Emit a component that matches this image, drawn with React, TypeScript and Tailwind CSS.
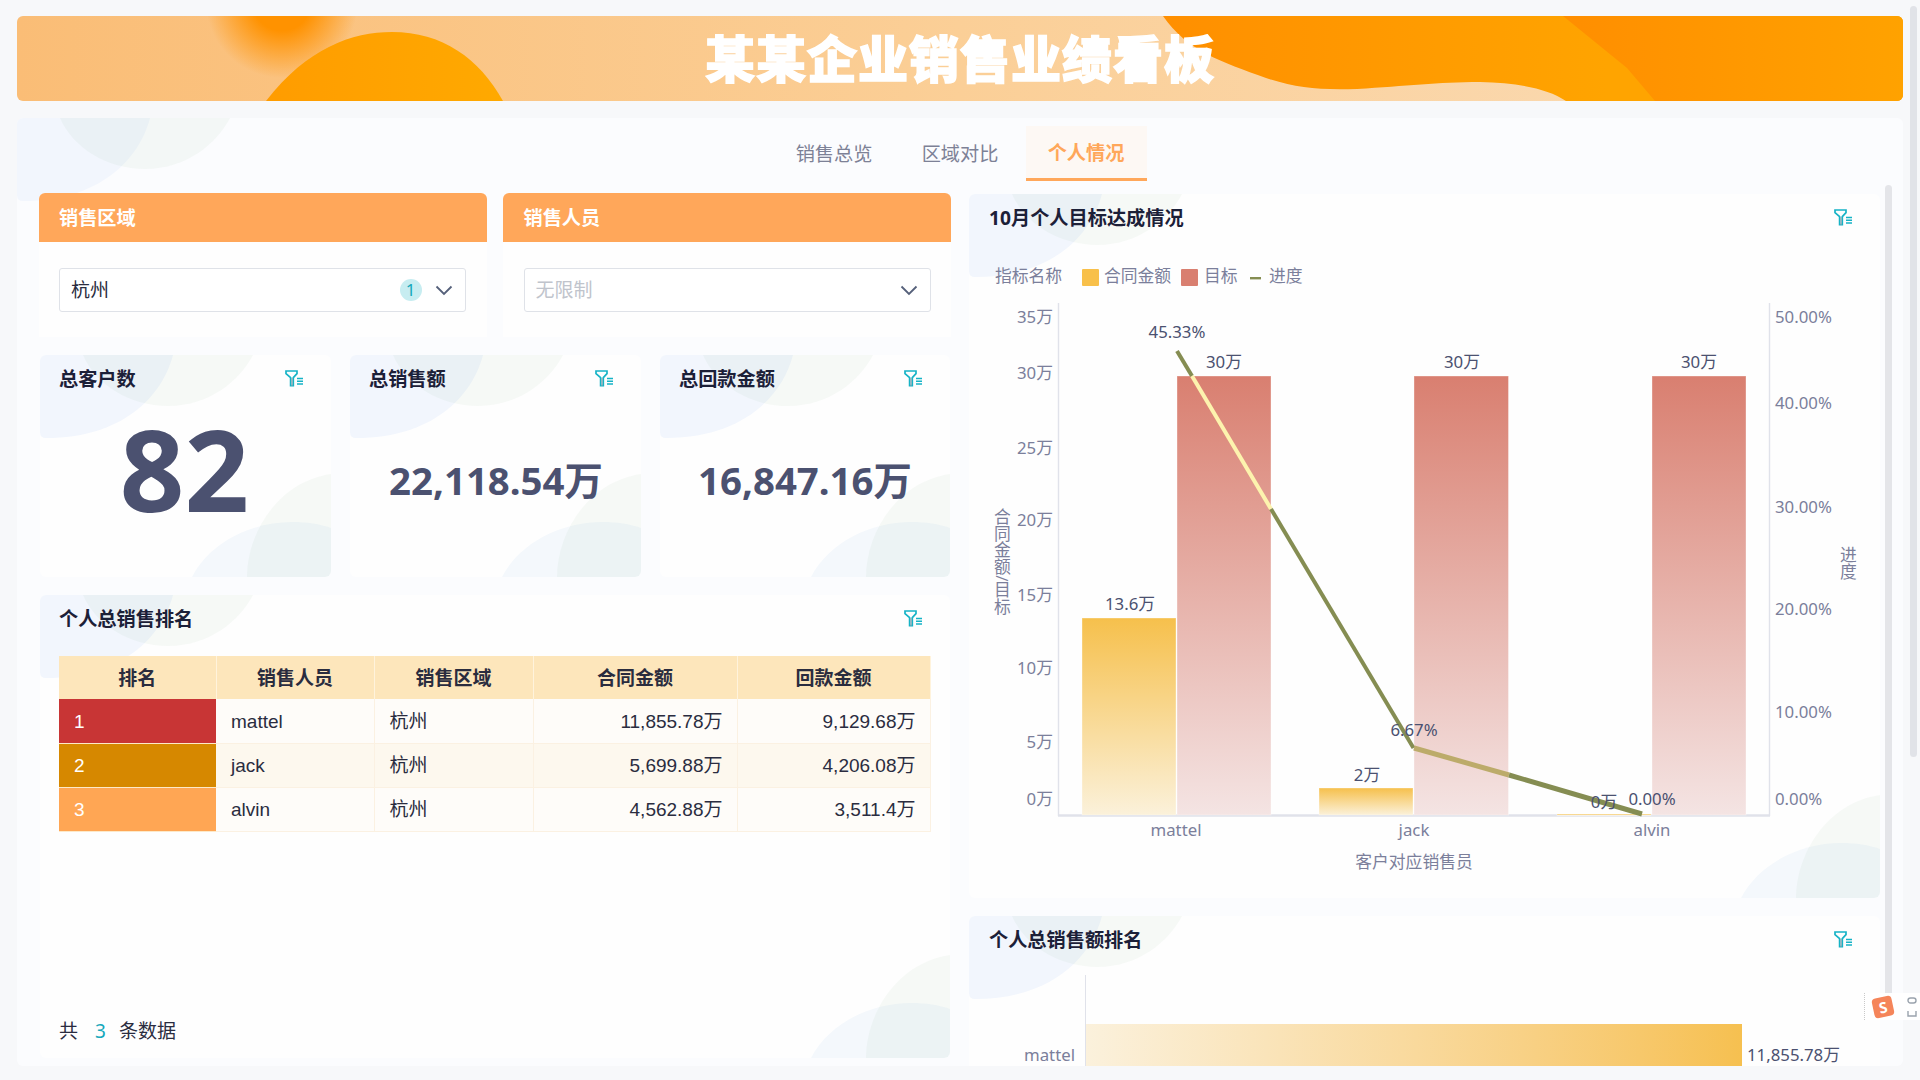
import React from "react";

function FilterIcon() {
  return (
    <svg width="18" height="17" viewBox="0 0 18 17" fill="none">
      <path d="M1 1H12V3.6L8.3 7.6V15.6H5.6V7.6L1 3.6Z" stroke="#16b3c6" strokeWidth="1.7" />
      <path d="M7 8V16" stroke="#8fa3ad" strokeWidth="1.2" />
      <path d="M12 8.5H18M12 11.2H18M12 14H18" stroke="#16b3c6" strokeWidth="1.6" />
    </svg>
  );
}

function TopDeco() {
  return (
    <svg className="absolute left-0 top-0" width="213" height="84" viewBox="0 0 213 84">
      <path d="M0 0H133C122 42 82 83 6 83Q0 83 0 77Z" fill="#f2f6fd" />
      <path d="M43 0C56 30 90 51 128 51C170 51 200 25 213 0Z" fill="rgb(110,165,105)" fillOpacity="0.055" />
    </svg>
  );
}

function BottomDeco() {
  return (
    <svg className="absolute bottom-0 right-0" width="139" height="103" viewBox="0 0 139 103">
      <path d="M0 103C18 68 60 48 100 48C115 48 128 50 139 54V103Z" fill="#f4f8fc" />
      <path d="M55 103C55 60 85 8 139 0V103Z" fill="rgb(110,165,105)" fillOpacity="0.055" />
    </svg>
  );
}

function Card({ title, className, children }: { title: string; className: string; children?: React.ReactNode }) {
  return (
    <div className={"relative overflow-hidden rounded-md bg-[#fefefe] " + className}>
      <TopDeco />
      <BottomDeco />
      <div className="relative flex h-[46px] items-center justify-between pl-[19px] pr-[28px]">
        <span className="pt-[2px] text-[19.2px] font-bold text-[#1c2038]">{title}</span>
        <FilterIcon />
      </div>
      <div className="relative">{children}</div>
    </div>
  );
}

function Chevron() {
  return (
    <svg width="18" height="11" viewBox="0 0 18 11" fill="none">
      <path d="M1.5 1.5L9 9L16.5 1.5" stroke="#55607a" strokeWidth="1.8" />
    </svg>
  );
}

function FilterCard({ title, className, bodyClass, children }: { title: string; className: string; bodyClass: string; children: React.ReactNode }) {
  return (
    <div className={"h-[144px] overflow-hidden rounded-t-md bg-[#fefefe] " + className}>
      <div className="flex h-[49px] items-center bg-[#ffa75a] pt-[2px] text-[19.2px] font-bold text-white">{title}</div>
      <div className={"pt-[26px] " + bodyClass}>{children}</div>
    </div>
  );
}

const rows = [
  { rank: "1", color: "bg-[#c83535]", name: "mattel", area: "杭州", a: "11,855.78万", b: "9,129.68万", bg: "bg-[#fefcf9]" },
  { rank: "2", color: "bg-[#d68800]", name: "jack", area: "杭州", a: "5,699.88万", b: "4,206.08万", bg: "bg-[#fdf8ee]" },
  { rank: "3", color: "bg-[#ffa654]", name: "alvin", area: "杭州", a: "4,562.88万", b: "3,511.4万", bg: "bg-[#fefcf9]" },
];

function SalesTable() {
  const th = "border-r border-[#fff3dc] pt-[3px] text-center text-[19px] font-bold text-[#2a2c3e]";
  const td = "border-r border-b border-[#fbf1e2] px-[14px] pt-[2px] text-[19px] text-[#2a2c40]";
  return (
    <table className="w-[871px] table-fixed border-collapse font-['Liberation_Sans','Noto_Sans_CJK_SC',sans-serif]">
      <colgroup>
        <col className="w-[157px]" />
        <col className="w-[158px]" />
        <col className="w-[159px]" />
        <col className="w-[204px]" />
        <col className="w-[193px]" />
      </colgroup>
      <thead>
        <tr className="h-[43px] bg-[#fde6bb]">
          {["排名", "销售人员", "销售区域", "合同金额", "回款金额"].map((h) => (
            <th key={h} className={th}>
              {h}
            </th>
          ))}
        </tr>
      </thead>
      <tbody>
        {rows.map((r) => (
          <tr key={r.rank} className={"h-[44px] " + r.bg}>
            <td className={"border-b border-[#fde9c9] pl-[15px] pt-[2px] text-[19px] text-white " + r.color}>{r.rank}</td>
            <td className={td + " pl-[15px]"}>{r.name}</td>
            <td className={td + " pl-[15px]"}>{r.area}</td>
            <td className={td + " text-right"}>{r.a}</td>
            <td className={td + " text-right"}>{r.b}</td>
          </tr>
        ))}
      </tbody>
    </table>
  );
}

function ChartText({
  x,
  y,
  children,
  anchor = "middle",
  fill = "#7b7f9b",
}: {
  x: number;
  y: number;
  children: React.ReactNode;
  anchor?: "start" | "middle" | "end";
  fill?: string;
}) {
  return (
    <text x={x} y={y - 1} textAnchor={anchor} dominantBaseline="central" fill={fill} fontSize="16.8">
      {children}
    </text>
  );
}

function VerticalText({ x, y, children }: { x: number; y: number; children: React.ReactNode }) {
  return (
    <text x={x} y={y} textAnchor="start" fill="#7b7f9b" fontSize="16.8" className="[writing-mode:vertical-rl]">
      {children}
    </text>
  );
}

function TargetChart() {
  const label = "#4b5170";
  const left: [string, number][] = [
    ["35万", 317],
    ["30万", 373],
    ["25万", 448],
    ["20万", 520],
    ["15万", 595],
    ["10万", 668],
    ["5万", 742],
    ["0万", 799],
  ];
  const right: [string, number][] = [
    ["50.00%", 317],
    ["40.00%", 403],
    ["30.00%", 507],
    ["20.00%", 609],
    ["10.00%", 712],
    ["0.00%", 799],
  ];
  return (
    <svg className="relative block" width="911" height="658" viewBox="969 240 911 658">
      <defs>
        <linearGradient id="yb" x1="0" y1="0" x2="0" y2="1">
          <stop offset="0" stopColor="#f6c04c" />
          <stop offset="1" stopColor="#fbf1da" />
        </linearGradient>
        <linearGradient id="rb" x1="0" y1="0" x2="0" y2="1">
          <stop offset="0" stopColor="#d97f70" />
          <stop offset="1" stopColor="#f4e4e3" />
        </linearGradient>
      </defs>

      <ChartText x={995} y={276} anchor="start">指标名称</ChartText>
      <rect x="1082" y="269" width="17" height="17" rx="1" fill="#f8c04a" />
      <ChartText x={1104} y={276} anchor="start">合同金额</ChartText>
      <rect x="1181" y="269" width="17" height="17" rx="1" fill="#d97f70" />
      <ChartText x={1204} y={276} anchor="start">目标</ChartText>
      <rect x="1250" y="277" width="11" height="2.4" fill="#858d52" />
      <ChartText x={1269} y={276} anchor="start">进度</ChartText>

      <path d="M1058.5 303V816M1769.5 303V816" stroke="#e0e2ea" strokeWidth="1.4" />
      <path d="M1058 815.5H1770" stroke="#e0e2ea" strokeWidth="2.4" />

      {left.map(([t, y]) => (
        <ChartText key={t} x={1053} y={y} anchor="end">{t}</ChartText>
      ))}
      {right.map(([t, y]) => (
        <ChartText key={t} x={1775} y={y} anchor="start">{t}</ChartText>
      ))}

      <g stroke="#ffffff" strokeOpacity="0.35">
        <rect x="1082" y="618" width="94" height="197" fill="url(#yb)" />
        <rect x="1177" y="376" width="94" height="439" fill="url(#rb)" />
        <rect x="1319" y="788" width="94" height="27" fill="url(#yb)" />
        <rect x="1414" y="376" width="94.5" height="439" fill="url(#rb)" />
        <rect x="1557" y="814" width="94" height="1.5" fill="url(#yb)" />
        <rect x="1652" y="376" width="94" height="439" fill="url(#rb)" />
      </g>

      <path d="M1177 351L1192 376" stroke="#858d52" strokeWidth="4" />
      <path d="M1192 376L1271 509" stroke="#fdf3ae" strokeWidth="4" />
      <path d="M1271 509L1413.5 748" stroke="#858d52" strokeWidth="4" />
      <path d="M1414 748L1509 775" stroke="#bcab6a" strokeWidth="5" />
      <path d="M1509 775L1642 814" stroke="#858d52" strokeWidth="5" />

      <ChartText x={1177} y={332} fill={label}>45.33%</ChartText>
      <ChartText x={1224} y={362} fill={label}>30万</ChartText>
      <ChartText x={1462} y={362} fill={label}>30万</ChartText>
      <ChartText x={1699} y={362} fill={label}>30万</ChartText>
      <ChartText x={1130} y={604} fill={label}>13.6万</ChartText>
      <ChartText x={1367} y={775} fill={label}>2万</ChartText>
      <ChartText x={1414} y={730} fill={label}>6.67%</ChartText>
      <ChartText x={1604} y={802} fill={label}>0万</ChartText>
      <ChartText x={1652} y={799} fill={label}>0.00%</ChartText>

      <ChartText x={1176} y={830}>mattel</ChartText>
      <ChartText x={1414} y={830}>jack</ChartText>
      <ChartText x={1652} y={830}>alvin</ChartText>
      <ChartText x={1414} y={862}>客户对应销售员</ChartText>

      <VerticalText x={1002} y={508}>合同金额/目标</VerticalText>
      <VerticalText x={1848} y={546}>进度</VerticalText>
    </svg>
  );
}

function RankBar() {
  return (
    <div className="flex h-[92px] pl-[14px]">
      <div className="flex w-[92px] flex-col justify-end pb-[1px] text-right text-[16.8px] leading-[22px] text-[#7b7f9b]">
        mattel
      </div>
      <div className="ml-[10px] flex flex-1 flex-col justify-end border-l border-[#e0e2ea]">
        <div className="flex h-[43px] items-end">
          <div className="h-[43px] w-[656px] bg-gradient-to-r from-[#fbf1dc] to-[#f6c050]" />
          <span className="ml-[5px] pb-[1px] text-[16.8px] leading-[22px] text-[#4b5170]">11,855.78万</span>
        </div>
      </div>
    </div>
  );
}

export default function App() {
  return (
    <div className="relative h-[1080px] w-[1920px] overflow-hidden bg-[#f7f8fa] font-['Noto_Sans','Noto_Sans_CJK_SC',sans-serif]">
      <header className="relative ml-[17px] mt-[16px] flex h-[85px] w-[1886px] items-center justify-center overflow-hidden rounded-md">
        <svg className="absolute inset-0" width="1886" height="85" viewBox="0 0 1886 85">
          <defs>
            <linearGradient id="hbg" x1="0" y1="0" x2="1" y2="0">
              <stop offset="0" stopColor="#fabd76" />
              <stop offset="0.5" stopColor="#fbcf97" />
              <stop offset="1" stopColor="#fadcb8" />
            </linearGradient>
            <radialGradient id="glow" gradientUnits="userSpaceOnUse" cx="265" cy="-14" r="76">
              <stop offset="0.38" stopColor="#ff9200" />
              <stop offset="1" stopColor="#ff9200" stopOpacity="0" />
            </radialGradient>
            <linearGradient id="dome" x1="0" y1="0" x2="1" y2="0">
              <stop offset="0" stopColor="#ff9c00" />
              <stop offset="1" stopColor="#ffa900" />
            </linearGradient>
            <linearGradient id="wave" x1="0" y1="0" x2="1" y2="0">
              <stop offset="0" stopColor="#ff8f00" />
              <stop offset="0.6" stopColor="#ffa400" />
            </linearGradient>
            <linearGradient id="wave2" x1="0" y1="0" x2="1" y2="0">
              <stop offset="0" stopColor="#ff8e00" />
              <stop offset="1" stopColor="#ffa200" />
            </linearGradient>
          </defs>
          <rect width="1886" height="85" fill="url(#hbg)" />
          <rect width="420" height="85" fill="url(#glow)" />
          <path d="M249 85C290 32 335 16 375 16C425 16 462 42 486 85Z" fill="url(#dome)" />
          <path d="M1146 0C1170 35 1205 46 1249 62C1280 72 1300 74 1340 73C1390 70 1420 66 1463 66C1500 67 1530 72 1549 85H1886V0Z" fill="url(#wave)" />
          <path d="M1546 0L1610 52L1638 85H1886V0Z" fill="url(#wave2)" />
        </svg>
        <h1 className="relative text-[50px] font-black leading-none tracking-[1px] text-white [-webkit-text-stroke:1.5px_white]">
          某某企业销售业绩看板
        </h1>
      </header>

      <main className="relative ml-[17px] mt-[17px] h-[948px] w-[1886px] overflow-hidden rounded-md bg-[#fbfcfe] pl-[22px]">
        <TopDeco />
        <nav className="relative flex h-[63px] justify-center gap-[5px] pr-[22px] pt-[8px]">
          <div className="flex h-[55px] w-[121px] items-center justify-center pt-[2px] text-[19.2px] text-[#7d8196]">销售总览</div>
          <div className="flex h-[55px] w-[121px] items-center justify-center pt-[2px] text-[19.2px] text-[#7d8196]">区域对比</div>
          <div className="flex h-[55px] w-[121px] items-center justify-center border-b-[3px] border-[#ffa75a] bg-[#fdf8f4] pt-[2px] text-[19.2px] font-bold text-[#ffa75a]">
            个人情况
          </div>
        </nav>

        <div className="relative mt-[12px] flex items-start gap-[18px]">
          <section className="w-[912px]">
            <div className="flex gap-[16px]">
              <FilterCard title="销售区域" className="w-[448px] [&>div:first-child]:pl-[20px]" bodyClass="pl-[20px] pr-[21px]">
                <div className="flex h-[44px] items-center rounded-[3px] border border-[#dfe2e8] bg-white pl-[11px] pr-[12px]">
                  <span className="flex-1 text-[19px] text-[#2a2c40]">杭州</span>
                  <span className="mr-[13px] flex h-[22px] w-[22px] items-center justify-center rounded-full bg-[#c7edf1] text-[17px] text-[#16a8bb]">1</span>
                  <Chevron />
                </div>
              </FilterCard>
              <FilterCard title="销售人员" className="w-[449px] [&>div:first-child]:pl-[21px]" bodyClass="pl-[21px] pr-[20px]">
                <div className="flex h-[44px] items-center justify-between rounded-[3px] border border-[#dfe2e8] bg-white pl-[11px] pr-[12px]">
                  <span className="text-[19px] text-[#c0c4cc]">无限制</span>
                  <Chevron />
                </div>
              </FilterCard>
            </div>

            <div className="ml-px mt-[18px] flex gap-[19px]">
              <Card title="总客户数" className="h-[222px] w-[291px]">
                <div className="-mt-[6px] flex h-[150px] justify-center pr-[2px] text-[113px] font-bold leading-[146px] text-[#4b5170]">82</div>
              </Card>
              <Card title="总销售额" className="h-[222px] w-[291px]">
                <div className="flex justify-center pl-[1px] pt-[54px] text-[38.4px] font-bold leading-[50px] text-[#4b5170]">22,118.54万</div>
              </Card>
              <Card title="总回款金额" className="h-[222px] w-[290px]">
                <div className="flex justify-center pt-[54px] text-[38.4px] font-bold leading-[50px] text-[#4b5170]">16,847.16万</div>
              </Card>
            </div>

            <Card title="个人总销售排名" className="ml-px mt-[18px] h-[463px] w-[910px]">
              <div className="pl-[19px] pt-[15px]">
                <SalesTable />
                <div className="mt-[186px] flex items-center text-[19px] leading-[26px] text-[#2a2c40]">
                  <span>共</span>
                  <span className="ml-[17px] text-[#16a8bb]">3</span>
                  <span className="ml-[13px]">条数据</span>
                </div>
              </div>
            </Card>
          </section>

          <section className="mt-px w-[911px]">
            <div className="relative h-[704px] overflow-hidden rounded-md bg-[#fefefe]">
              <TopDeco />
              <BottomDeco />
              <div className="relative flex h-[46px] items-center justify-between pl-[20px] pr-[28px]">
                <span className="pt-[2px] text-[19.2px] font-bold text-[#1c2038]">10月个人目标达成情况</span>
                <FilterIcon />
              </div>
              <TargetChart />
            </div>
            <div className="relative mt-[18px] h-[160px] overflow-hidden rounded-md bg-[#fefefe]">
              <TopDeco />
              <div className="relative flex h-[46px] items-center justify-between pl-[20px] pr-[28px]">
                <span className="pt-[2px] text-[19.2px] font-bold text-[#1c2038]">个人总销售额排名</span>
                <FilterIcon />
              </div>
              <div className="relative mt-[13px]">
                <RankBar />
              </div>
            </div>
          </section>
        </div>

        <div className="absolute left-[1868px] top-[67px] h-[815px] w-[7px] rounded-full bg-[#e4e5e9]" />
      </main>

      <div className="absolute left-[1910px] top-[6px] h-[751px] w-[7px] rounded-full bg-[#e1e3e8]" />

      <div className="absolute left-[1864px] top-[993px] flex h-[27px] w-[56px] items-center border-l border-dotted border-[#c9c9c9] bg-white pl-[8px]">
        <span className="flex h-[20px] w-[20px] rotate-[-12deg] items-center justify-center rounded-[4px] bg-[#f5855a] text-[15px] font-bold leading-none text-white">S</span>
        <svg className="ml-[14px]" width="10" height="22" viewBox="0 0 10 22" fill="none">
          <rect x="1" y="2" width="8" height="5" rx="2.5" stroke="#9aa3ad" strokeWidth="1.4" />
          <path d="M1 15V20H9V15" stroke="#9aa3ad" strokeWidth="1.4" />
        </svg>
      </div>
    </div>
  );
}
